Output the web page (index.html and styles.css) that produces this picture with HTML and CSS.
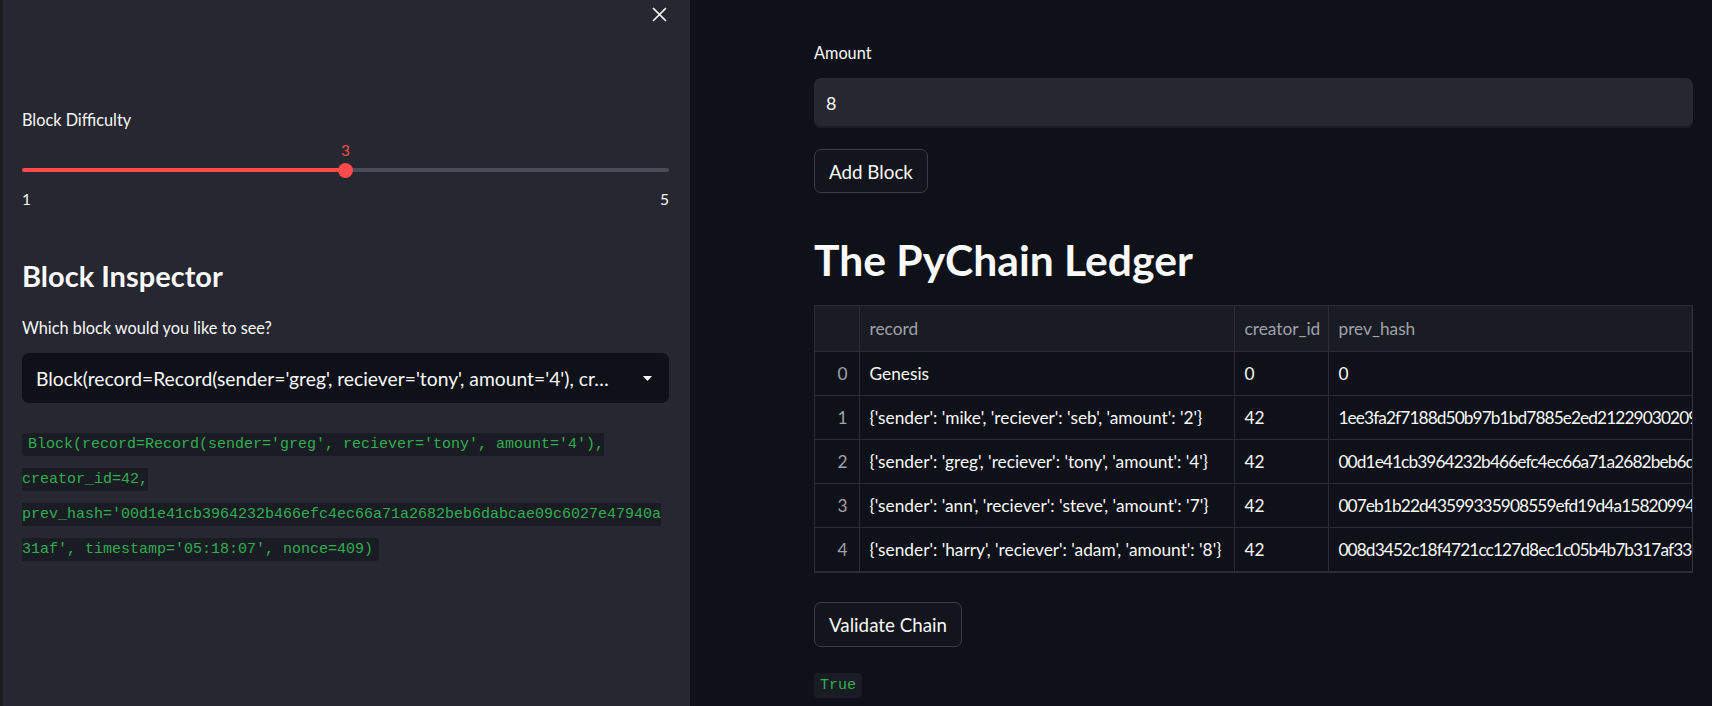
FILE: index.html
```html
<!DOCTYPE html>
<html>
<head>
<meta charset="utf-8">
<link rel="stylesheet" href="styles.css">
</head>
<body>
<div class="app">
  <aside class="sidebar">
    <div class="sb-head">
      <svg class="close" width="15" height="15" viewBox="0 0 15 15"><path d="M1 1L14 14M14 1L1 14" stroke="#fafafa" stroke-width="1.7" fill="none"/></svg>
    </div>
    <div class="label sb-diff">Block Difficulty</div>
    <div class="slider">
      <div class="slider-value"><span>3</span></div>
      <div class="track">
        <div class="fill"></div>
        <div class="thumb"></div>
        <div class="rest"></div>
      </div>
      <div class="minmax"><span>1</span><span>5</span></div>
    </div>
    <h2 class="sb-title">Block Inspector</h2>
    <div class="label sb-q">Which block would you like to see?</div>
    <div class="select">
      <span class="select-text">Block(record=Record(sender='greg', reciever='tony', amount='4'), cr…</span>
      <svg class="caret" width="9" height="5" viewBox="0 0 9 5"><path d="M0 0H9L4.5 5Z" fill="#fafafa"/></svg>
    </div>
    <p class="code-para"><code>Block(record=Record(sender='greg', reciever='tony', amount='4'), creator_id=42, prev_hash='00d1e41cb3964232b466efc4ec66a71a2682beb6dabcae09c6027e47940a31af', timestamp='05:18:07', nonce=409)</code></p>
  </aside>
  <main class="main">
    <div class="label">Amount</div>
    <div class="input">8</div>
    <button class="btn btn-add">Add Block</button>
    <h1 class="title">The PyChain Ledger</h1>
    <div class="table-wrap">
      <table class="ledger">
        <colgroup>
          <col class="c-idx"><col class="c-rec"><col class="c-cre"><col class="c-hash"><col class="c-ts"><col class="c-nonce">
        </colgroup>
        <thead>
          <tr><th></th><th>record</th><th>creator_id</th><th>prev_hash</th><th>timestamp</th><th>nonce</th></tr>
        </thead>
        <tbody>
          <tr><td class="idx">0</td><td>Genesis</td><td>0</td><td class="hash">0</td><td>05:15:41</td><td>0</td></tr>
          <tr><td class="idx">1</td><td>{'sender': 'mike', 'reciever': 'seb', 'amount': '2'}</td><td>42</td><td class="hash">1ee3fa2f7188d50b97b1bd7885e2ed21229030209c41b7e8a3f5d10b2c6e9a47</td><td>05:16:12</td><td>77</td></tr>
          <tr><td class="idx">2</td><td>{'sender': 'greg', 'reciever': 'tony', 'amount': '4'}</td><td>42</td><td class="hash">00d1e41cb3964232b466efc4ec66a71a2682beb6dabcae09c6027e47940a31af</td><td>05:18:07</td><td>409</td></tr>
          <tr><td class="idx">3</td><td>{'sender': 'ann', 'reciever': 'steve', 'amount': '7'}</td><td>42</td><td class="hash">007eb1b22d43599335908559efd19d4a15820994127ab3c58de04f96b21c7e03</td><td>05:18:40</td><td>1052</td></tr>
          <tr><td class="idx">4</td><td>{'sender': 'harry', 'reciever': 'adam', 'amount': '8'}</td><td>42</td><td class="hash">008d3452c18f4721cc127d8ec1c05b4b7b317af3341e9c0d7a2b85f6e4c9d210</td><td>05:19:02</td><td>2318</td></tr>
        </tbody>
      </table>
    </div>
    <button class="btn btn-validate">Validate Chain</button>
    <div class="result"><code>True</code></div>
  </main>
</div>
</body>
</html>
```
FILE: styles.css
```css
* { box-sizing: border-box; }
html, body { margin: 0; padding: 0; }
body {
  background: #0e1117;
  color: #fafafa;
  font-family: "Lato", "Liberation Sans", sans-serif;
  overflow: hidden;
}
.app { display: flex; height: 706px; }

.sidebar {
  width: 690px;
  flex-shrink: 0;
  background: #262730;
  padding: 0 21px 0 22px;
  box-shadow: inset 3px 0 0 #1b1c22;
}
.sb-head { height: 30px; display: flex; justify-content: flex-end; padding-top: 7px; padding-right: 2px; }
.close { display: block; }

.label { font-size: 16.3px; line-height: 20px; color: #fafafa; }
.sb-diff { margin-top: 80px; }

.slider { margin-top: 11px; }
.slider-value { padding-left: 50%; height: 18px; line-height: 18px; font-size: 15.5px; color: #ff4b4b; }
.slider-value span { display: inline-block; transform: translateX(-50%); }
.track { margin-top: 9px; height: 4px; display: flex; align-items: center; }
.fill { width: 50%; height: 4px; background: #ff4b4b; border-radius: 2px 0 0 2px; }
.thumb { width: 15px; height: 15px; border-radius: 50%; background: #ff4b4b; margin: 0 -7.5px; flex-shrink: 0; position: relative; z-index: 1; }
.rest { flex: 1; height: 4px; background: #4a4c57; border-radius: 0 2px 2px 0; }
.minmax { margin-top: 18px; display: flex; justify-content: space-between; font-size: 15.5px; line-height: 18px; }

.sb-title { margin: 50px 0 0; font-size: 29px; line-height: 36px; font-weight: 700; }
.sb-q { margin-top: 24px; }

.select {
  margin-top: 15px;
  height: 50px;
  background: #0e1117;
  border-radius: 7px;
  display: flex;
  align-items: center;
  padding: 0 17px 0 14px;
  justify-content: space-between;
}
.select-text { font-size: 19.3px; white-space: nowrap; }
.caret { display: block; }

.code-para {
  margin: 23px 0 0;
  line-height: 32px;
  overflow-wrap: break-word;
}
code {
  font-family: "Liberation Mono", "DejaVu Sans Mono", monospace;
  font-size: 15px;
  color: #2fae50;
  background: #1a1c24;
  padding: 3px 6px;
  border-radius: 4px;
}

.main {
  flex: 1;
  padding: 43px 19px 0 124px;
  min-width: 0;
}
.input {
  margin-top: 15px;
  height: 50px;
  background: #262730;
  border-radius: 7px;
  padding: 0 12px;
  display: flex;
  align-items: center;
  font-size: 18px;
  box-shadow: inset 0 -2px 0 #1c1d24;
}
.btn {
  display: block;
  background: #13151c;
  color: #fafafa;
  border: 1px solid #3b3d46;
  border-radius: 7px;
  font-family: inherit;
  font-size: 18.8px;
  padding: 0 14px;
}
.btn-add { margin-top: 21px; height: 44px; }
.title { margin: 41px 0 0; font-size: 42.6px; line-height: 52px; font-weight: 700; }

.table-wrap {
  margin-top: 19px;
  overflow: hidden;
  border: 1px solid #2b2d35;
  border-right-color: #33353e;
}
.ledger {
  border-collapse: collapse;
  table-layout: fixed;
  width: 1300px;
  font-size: 17.3px;
}
.c-idx { width: 44px; }
.c-rec { width: 375px; }
.c-cre { width: 94px; }
.c-hash { width: 562px; }
.c-ts { width: 110px; }
.c-nonce { width: 115px; }
.ledger th, .ledger td {
  height: 44px;
  padding: 0 10px;
  text-align: left;
  white-space: nowrap;
  overflow: hidden;
  border-right: 1px solid #2b2d35;
  border-bottom: 1px solid #2b2d35;
  font-weight: 400;
}
.ledger thead th { background: #1a1c23; color: #9fa2aa; height: 45px; }
.ledger td.idx { text-align: right; color: #9fa2aa; padding-right: 11px; }
.ledger td.hash { letter-spacing: -0.9px; }

.btn-validate { margin-top: 29px; height: 45px; }
.result { margin-top: 23px; line-height: 25px; }
.result code { padding: 4px 6px; }
```
